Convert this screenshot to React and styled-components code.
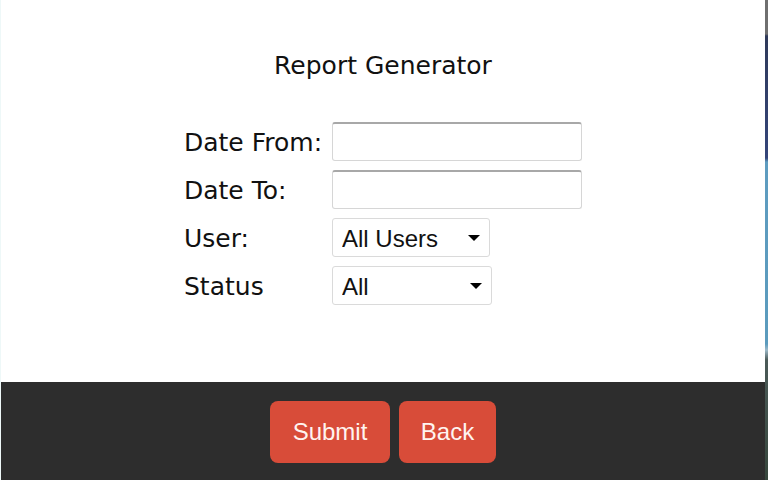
import React from "react";
import styled, { createGlobalStyle } from "styled-components";

const GlobalStyle = createGlobalStyle`
  html, body {
    margin: 0;
    padding: 0;
    height: 100%;
    overflow: hidden;
  }
  body {
    background: linear-gradient(
      to bottom,
      #6f6f6f 0px,
      #6f6f6f 34px,
      #2f3a5a 36px,
      #34457a 158px,
      #5e9cc0 162px,
      #5b9bbd 344px,
      #9db9c8 350px,
      #4b5a58 360px,
      #36463c 480px
    );
  }
`;

const Modal = styled.div`
  width: 765px;
  height: 480px;
  background: #fff;
  display: flex;
  flex-direction: column;
  border-left: 1px solid #eef8f8;
  box-sizing: border-box;
`;

const Body = styled.div`
  flex: 1;
  display: flex;
  flex-direction: column;
  align-items: center;
`;

const Title = styled.h1`
  margin: 50px 0 0;
  font-family: "DejaVu Sans", Verdana, sans-serif;
  font-weight: normal;
  font-size: 25px;
  line-height: 32px;
  color: #111;
`;

const Form = styled.div`
  margin-top: 40px;
  display: grid;
  grid-template-columns: 148px auto;
  row-gap: 9px;
  align-items: center;
  justify-items: start;
`;

const Label = styled.label`
  font-family: "DejaVu Sans", Verdana, sans-serif;
  font-size: 25px;
  color: #111;
  height: 39px;
  line-height: 37px;
  padding-top: 2px;
  box-sizing: border-box;
`;

const TextInput = styled.input`
  width: 250px;
  height: 39px;
  box-sizing: border-box;
  border: 1px solid #d6d6d6;
  border-top: 2px solid #a8a8a8;
  border-radius: 3px;
  background: #fff;
  font-size: 20px;
  outline: none;
  padding: 0 8px;
`;

const SelectWrap = styled.div`
  position: relative;
  width: ${(p) => p.width}px;
  height: 39px;

  &::after {
    content: "";
    position: absolute;
    right: 10px;
    top: 17px;
    border-left: 6px solid transparent;
    border-right: 6px solid transparent;
    border-top: 6px solid #000;
    pointer-events: none;
  }
`;

const Select = styled.select`
  appearance: none;
  -webkit-appearance: none;
  width: 100%;
  height: 100%;
  box-sizing: border-box;
  border: 1px solid #dadada;
  border-radius: 3px;
  background: #fff;
  font-family: "Liberation Sans", Arial, sans-serif;
  font-size: 24px;
  color: #111;
  padding: 2px 0 0 9px;
  outline: none;
`;

const Footer = styled.div`
  height: 98px;
  background: #2d2d2d;
  display: flex;
  justify-content: center;
  align-items: center;
  gap: 9px;
  padding-top: 2px;
  box-sizing: border-box;
`;

const Button = styled.button`
  width: ${(p) => p.width}px;
  height: 62px;
  border: none;
  border-radius: 8px;
  background: #d84c39;
  color: #fff4f0;
  font-family: "Liberation Sans", Arial, sans-serif;
  font-size: 24px;
  cursor: pointer;
  padding: 0;
`;

const App = () => {
  return (
    <>
      <GlobalStyle />
      <Modal>
        <Body>
          <Title>Report Generator</Title>
          <Form>
            <Label>Date From:</Label>
            <TextInput type="text" />
            <Label>Date To:</Label>
            <TextInput type="text" />
            <Label>User:</Label>
            <SelectWrap width={158}>
              <Select defaultValue="all">
                <option value="all">All Users</option>
              </Select>
            </SelectWrap>
            <Label>Status</Label>
            <SelectWrap width={160}>
              <Select defaultValue="all">
                <option value="all">All</option>
              </Select>
            </SelectWrap>
          </Form>
        </Body>
        <Footer>
          <Button width={120}>Submit</Button>
          <Button width={97}>Back</Button>
        </Footer>
      </Modal>
    </>
  );
};

export default App;
